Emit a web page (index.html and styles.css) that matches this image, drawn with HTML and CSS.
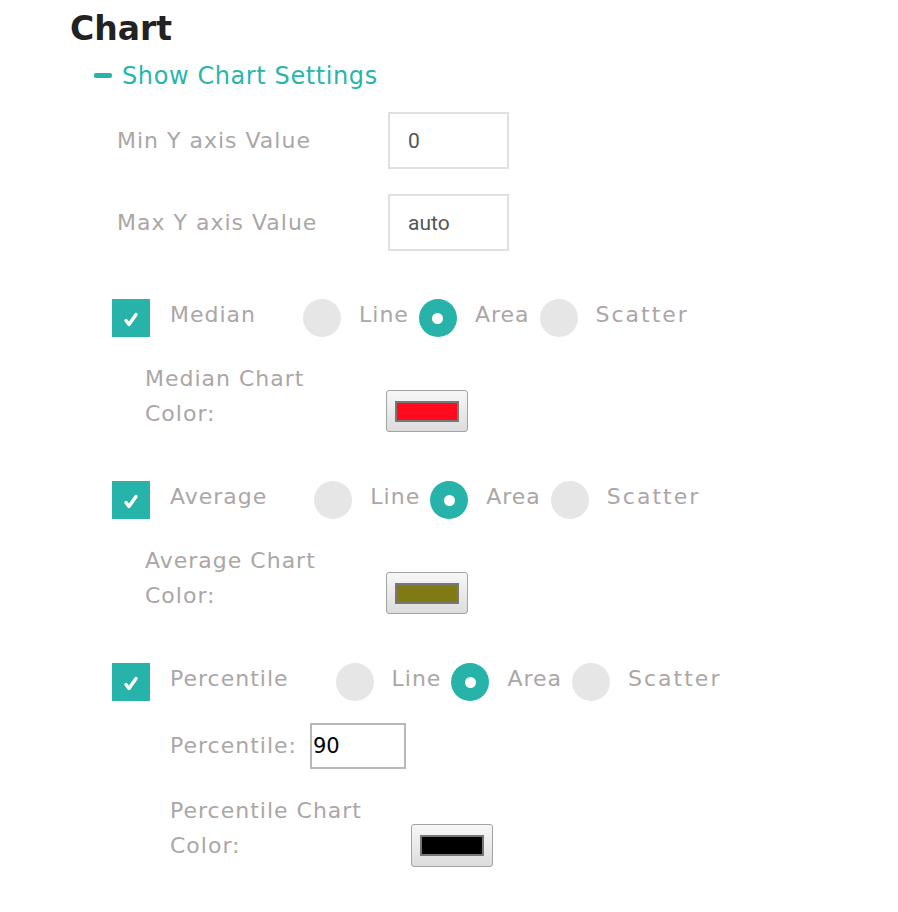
FILE: index.html
```html
<!DOCTYPE html>
<html>
<head>
<meta charset="utf-8">
<title>Chart</title>
<link rel="stylesheet" href="styles.css">
</head>
<body>
<div class="page">
  <h1 class="title">Chart</h1>
  <div class="toggle"><span class="dash"></span><span class="toggle-text">Show Chart Settings</span></div>

  <div class="fields">
    <div class="field">
      <span class="field-label">Min Y axis Value</span>
      <input class="field-input" type="text" value="0">
    </div>
    <div class="field">
      <span class="field-label">Max Y axis Value</span>
      <input class="field-input" type="text" value="auto">
    </div>
  </div>

  <div class="series-list">
    <div class="series">
      <div class="series-row">
        <span class="check"><svg viewBox="0 0 38 38" width="38" height="38"><path d="M14 21.5 L17 25.5 L24 15.5" fill="none" stroke="#fff" stroke-width="3.4" stroke-linecap="round" stroke-linejoin="round"/></svg></span>
        <span class="series-name">Median</span>
        <span class="radio first"></span><span class="opt">Line</span>
        <span class="radio on"></span><span class="opt">Area</span>
        <span class="radio"></span><span class="opt">Scatter</span>
      </div>
      <div class="color-row">
        <span class="color-label">Median Chart Color:</span>
        <span class="color-btn"><span class="swatch red"></span></span>
      </div>
    </div>

    <div class="series">
      <div class="series-row">
        <span class="check"><svg viewBox="0 0 38 38" width="38" height="38"><path d="M14 21.5 L17 25.5 L24 15.5" fill="none" stroke="#fff" stroke-width="3.4" stroke-linecap="round" stroke-linejoin="round"/></svg></span>
        <span class="series-name">Average</span>
        <span class="radio first"></span><span class="opt">Line</span>
        <span class="radio on"></span><span class="opt">Area</span>
        <span class="radio"></span><span class="opt">Scatter</span>
      </div>
      <div class="color-row">
        <span class="color-label">Average Chart Color:</span>
        <span class="color-btn"><span class="swatch olive"></span></span>
      </div>
    </div>

    <div class="series">
      <div class="series-row">
        <span class="check"><svg viewBox="0 0 38 38" width="38" height="38"><path d="M14 21.5 L17 25.5 L24 15.5" fill="none" stroke="#fff" stroke-width="3.4" stroke-linecap="round" stroke-linejoin="round"/></svg></span>
        <span class="series-name">Percentile</span>
        <span class="radio first"></span><span class="opt">Line</span>
        <span class="radio on"></span><span class="opt">Area</span>
        <span class="radio"></span><span class="opt">Scatter</span>
      </div>
      <div class="pct-row">
        <span class="pct-label">Percentile:</span>
        <input class="pct-input" type="text" value="90">
      </div>
      <div class="color-row deep">
        <span class="color-label">Percentile Chart Color:</span>
        <span class="color-btn"><span class="swatch black"></span></span>
      </div>
    </div>
  </div>
</div>
</body>
</html>
```

FILE: styles.css
```css
html, body {
  margin: 0;
  padding: 0;
  background: #ffffff;
}

.page {
  padding: 9px 0 0 70px;
  font-family: "DejaVu Sans", Verdana, sans-serif;
}

.title {
  margin: 0;
  font-size: 33px;
  font-weight: bold;
  line-height: 40px;
  color: #222222;
}

.toggle {
  display: flex;
  align-items: center;
  margin: 11px 0 0 24px;
  height: 30px;
}

.dash {
  width: 18px;
  height: 5px;
  border-radius: 2px;
  background: #27b3a9;
  margin-right: 10px;
}

.toggle-text {
  font-size: 24px;
  line-height: 30px;
  letter-spacing: 0.6px;
  color: #2ab5ab;
  padding-top: 2px;
}

.fields {
  margin: 22px 0 0 47px;
  display: flex;
  flex-direction: column;
  gap: 25px;
}

.field {
  display: flex;
  align-items: center;
  height: 57px;
}

.field-label {
  width: 271px;
  font-size: 22px;
  line-height: 30px;
  letter-spacing: 1px;
  color: #aca6a6;
}

.field-input {
  box-sizing: border-box;
  width: 121px;
  height: 57px;
  margin: 0;
  padding: 0 0 0 18px;
  border: 2px solid #e0e0e0;
  border-radius: 0;
  font-family: Roboto, "Liberation Sans", sans-serif;
  font-size: 21px;
  color: #555555;
  background: #fff;
  outline: none;
}

.series-list {
  margin: 48px 0 0 42px;
}

.series {
  margin-bottom: 49px;
}

.series-row {
  display: flex;
  align-items: center;
  height: 38px;
}

.check {
  width: 38px;
  height: 38px;
  background: #27b3a9;
  display: block;
}

.check svg {
  display: block;
}

.series-name,
.opt {
  font-size: 22px;
  line-height: 30px;
  letter-spacing: 1px;
  color: #aca6a6;
  padding-bottom: 7px;
}

.series-name {
  margin-left: 20px;
}

.opt:last-child {
  letter-spacing: 2px;
}

.radio {
  width: 38px;
  height: 38px;
  border-radius: 50%;
  background: #e6e6e6;
  margin-right: 18px;
  margin-left: 10px;
  display: flex;
  align-items: center;
  justify-content: center;
  flex: none;
}

.radio.first {
  margin-left: 47px;
}

.radio.on {
  background: #27b3a9;
}

.radio.on::after {
  content: "";
  width: 11px;
  height: 11px;
  border-radius: 50%;
  background: #ffffff;
}

.color-row {
  display: flex;
  align-items: flex-start;
  margin: 24px 0 0 33px;
}

.color-row.deep {
  margin: 24px 0 0 58px;
}

.color-label {
  width: 210px;
  margin-right: 31px;
  font-size: 22px;
  line-height: 35px;
  letter-spacing: 1px;
  color: #aca6a6;
}

.color-btn {
  box-sizing: border-box;
  width: 82px;
  height: 42px;
  margin-top: 29px;
  border: 1px solid #a3a3a3;
  border-radius: 3px;
  background: linear-gradient(#f7f7f7, #dcdcdc);
  display: flex;
  align-items: center;
  justify-content: center;
}

.color-row.deep .color-btn {
  margin-top: 31px;
  height: 43px;
}

.swatch {
  box-sizing: border-box;
  width: 64px;
  height: 21px;
  border: 2px solid #777777;
  display: block;
}

.swatch.red { background: #ff0a1f; }
.swatch.olive { background: #7f7a14; }
.swatch.black { background: #000000; }

.pct-row {
  display: flex;
  align-items: center;
  margin: 22px 0 0 58px;
  height: 46px;
}

.pct-label {
  font-size: 22px;
  line-height: 30px;
  letter-spacing: 1px;
  color: #aca6a6;
  margin-right: 13px;
}

.pct-input {
  box-sizing: border-box;
  width: 96px;
  height: 46px;
  margin: 0;
  padding: 0 0 0 1px;
  border: 2px solid #b8b8b8;
  border-radius: 0;
  font-family: "DejaVu Sans", sans-serif;
  font-size: 21px;
  color: #000000;
  background: #fff;
  outline: none;
}
```
